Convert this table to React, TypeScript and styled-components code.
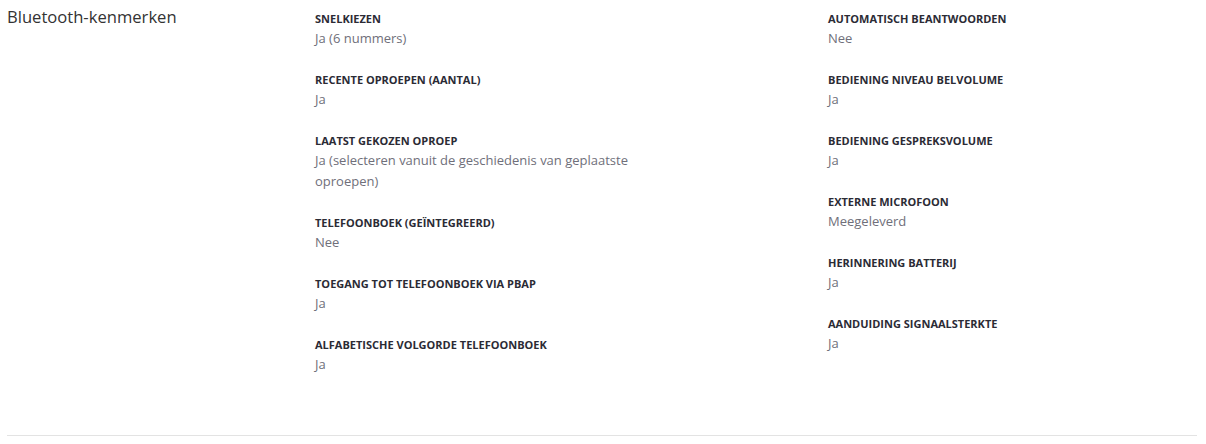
import React from 'react';
import styled, { createGlobalStyle } from 'styled-components';

const GlobalStyle = createGlobalStyle`
  body {
    margin: 0;
    background: #fff;
    font-family: "Open Sans", "Liberation Sans", sans-serif;
  }
`;

const Section = styled.section`
  display: grid;
  grid-template-columns: 308px 1fr;
  margin: 0 9px 0 7px;
  padding: 6px 0 0;
  height: 436px;
  box-sizing: border-box;
  border-bottom: 1px solid #e3e3e3;
`;

const Heading = styled.h2`
  margin: 0;
  font-size: 16.6px;
  font-weight: 400;
  line-height: 22px;
  color: #333;
`;

const Columns = styled.div`
  display: grid;
  grid-template-columns: 513px 1fr;
  align-items: start;
`;

const Column = styled.dl`
  margin: 0;
  padding-top: 3px;
  display: flex;
  flex-direction: column;
  gap: 21px;
`;

const Item = styled.div`
  max-width: 345px;
`;

const Label = styled.dt`
  font-size: 11px;
  font-weight: 700;
  line-height: 19px;
  color: #2b2b35;
  text-transform: uppercase;
`;

const Value = styled.dd`
  margin: 0;
  font-size: 13px;
  line-height: 21px;
  color: #6f6f7a;
`;

const left = [
  ['Snelkiezen', 'Ja (6 nummers)'],
  ['Recente oproepen (aantal)', 'Ja'],
  ['Laatst gekozen oproep', 'Ja (selecteren vanuit de geschiedenis van geplaatste oproepen)'],
  ['Telefoonboek (geïntegreerd)', 'Nee'],
  ['Toegang tot telefoonboek via PBAP', 'Ja'],
  ['Alfabetische volgorde telefoonboek', 'Ja'],
];

const right = [
  ['Automatisch beantwoorden', 'Nee'],
  ['Bediening niveau belvolume', 'Ja'],
  ['Bediening gespreksvolume', 'Ja'],
  ['Externe microfoon', 'Meegeleverd'],
  ['Herinnering batterij', 'Ja'],
  ['Aanduiding signaalsterkte', 'Ja'],
];

const renderItems = (items: string[][]) =>
  items.map(([label, value]) => (
    <Item key={label}>
      <Label>{label}</Label>
      <Value>{value}</Value>
    </Item>
  ));

const App = () => (
  <>
    <GlobalStyle />
    <Section>
      <Heading>Bluetooth-kenmerken</Heading>
      <Columns>
        <Column>{renderItems(left)}</Column>
        <Column>{renderItems(right)}</Column>
      </Columns>
    </Section>
  </>
);

export default App;
